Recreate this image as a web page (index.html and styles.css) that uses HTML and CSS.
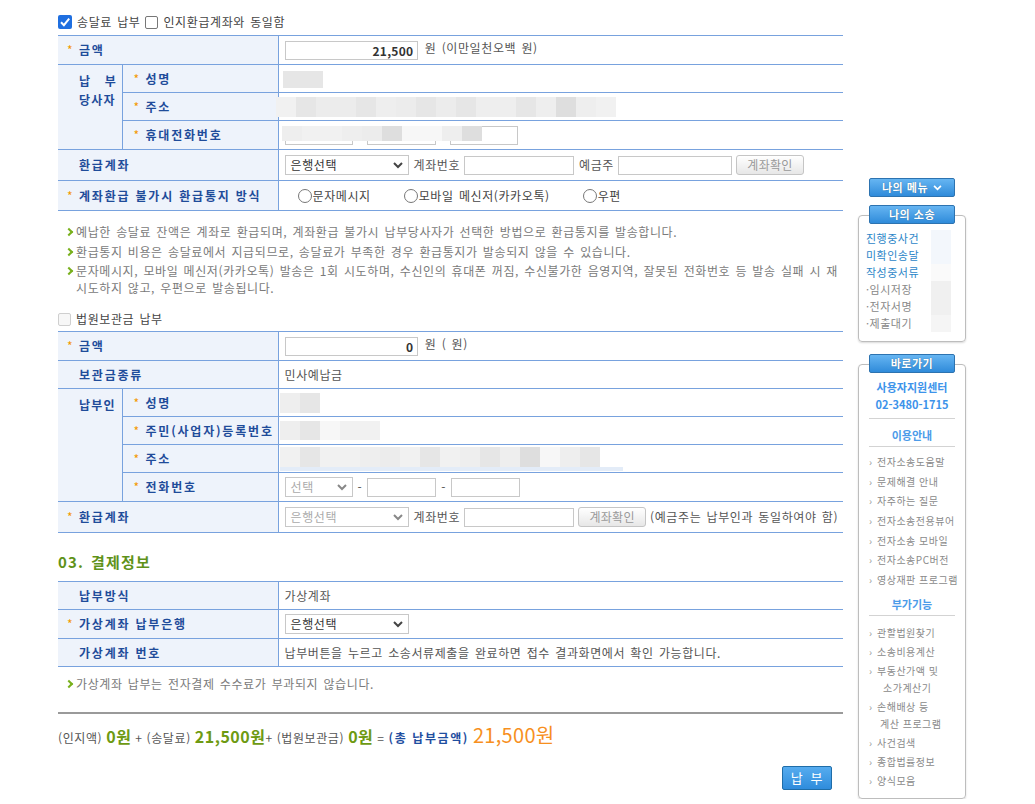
FILE: index.html
```html
<!DOCTYPE html>
<html lang="ko">
<head>
<meta charset="utf-8">
<title>납부</title>
<link rel="stylesheet" href="styles.css">
</head>
<body>
<div class="page">
  <main class="main">
    <div class="chkline">
      <span class="cb on"><svg viewBox="0 0 14 14" width="14" height="14"><path d="M3 7.3 L5.9 10.2 L11.2 3.6" fill="none" stroke="#fff" stroke-width="2"/></svg></span>
      <span class="chk-text">송달료 납부</span>
      <span class="cb"></span>
      <span class="chk-text">인지환급계좌와 동일함</span>
    </div>

    <table class="form">
      <colgroup><col class="c1"><col class="c2"><col class="c3"></colgroup>
      <tr class="h29">
        <th colspan="2"><i class="st">*</i>금액</th>
        <td><span class="inp amt">21,500</span> 원 (이만일천오백 원)</td>
      </tr>
      <tr class="h28">
        <th rowspan="3" class="grp"><span class="just"><span>납</span><span>부</span></span>당사자</th>
        <th class="sub"><i class="st">*</i>성명</th>
        <td class="blurcell"><span class="blur b-name1"><b class="g1"></b><b class="g1"></b></span></td>
      </tr>
      <tr class="h28">
        <th class="sub"><i class="st">*</i>주소</th>
        <td class="blurcell"><span class="blur b-addr1"><b class="g5"></b><b class="g1"></b><b class="g2"></b><b class="g2"></b><b class="g1"></b><b class="g3"></b><b class="g2"></b><b class="g1"></b><b class="g2"></b><b class="g1"></b><b class="g3"></b><b class="g3"></b><b class="g1"></b><b class="g3"></b><b class="g4"></b><b class="g3"></b><b class="g5"></b></span></td>
      </tr>
      <tr class="h29">
        <th class="sub"><i class="st">*</i>휴대전화번호</th>
        <td>
          <span class="phone">
            <span class="inp ph"></span><span class="inp ph"></span><span class="inp ph"></span>
            <span class="blur b-ph"><b class="g3"></b><b class="g5"></b><b class="g5"></b><b class="g3"></b><b class="g2"></b><b class="g4"></b><b class="g6"></b><b class="g6"></b><b class="g3"></b><b class="g4"></b></span>
          </span>
        </td>
      </tr>
      <tr class="h31">
        <th colspan="2" class="nost">환급계좌</th>
        <td>
          <span class="row-ctrl">
            <span class="sel bank">은행선택<svg class="chev" viewBox="0 0 10 7" width="10" height="7"><path d="M1 1 L5 5 L9 1" fill="none" stroke="#444" stroke-width="2"/></svg></span>
            <span class="lbl">계좌번호</span><span class="inp acct"></span>
            <span class="lbl">예금주</span><span class="inp owner"></span>
            <span class="btn-gray">계좌확인</span>
          </span>
        </td>
      </tr>
      <tr class="h30">
        <th colspan="2"><i class="st">*</i>계좌환급 불가시 환급통지 방식</th>
        <td>
          <span class="radios">
            <span class="opt"><span class="rd"></span>문자메시지</span>
            <span class="opt"><span class="rd"></span>모바일 메신저(카카오톡)</span>
            <span class="opt"><span class="rd"></span>우편</span>
          </span>
        </td>
      </tr>
    </table>

    <ul class="notes">
      <li>예납한 송달료 잔액은 계좌로 환급되며, 계좌환급 불가시 납부당사자가 선택한 방법으로 환급통지를 발송합니다.</li>
      <li>환급통지 비용은 송달료에서 지급되므로, 송달료가 부족한 경우 환급통지가 발송되지 않을 수 있습니다.</li>
      <li>문자메시지, 모바일 메신저(카카오톡) 발송은 1회 시도하며, 수신인의 휴대폰 꺼짐, 수신불가한 음영지역, 잘못된 전화번호 등 발송 실패 시 재<br>시도하지 않고, 우편으로 발송됩니다.</li>
    </ul>

    <div class="chkline second">
      <span class="cb dis"></span>
      <span class="chk-text">법원보관금 납부</span>
    </div>

    <table class="form">
      <colgroup><col class="c1"><col class="c2"><col class="c3"></colgroup>
      <tr class="h29">
        <th colspan="2"><i class="st">*</i>금액</th>
        <td><span class="inp amt">0</span> 원 ( 원)</td>
      </tr>
      <tr class="h28">
        <th colspan="2" class="nost">보관금종류</th>
        <td>민사예납금</td>
      </tr>
      <tr class="h28">
        <th rowspan="4" class="grp">납부인</th>
        <th class="sub"><i class="st">*</i>성명</th>
        <td class="blurcell"><span class="blur b-name2"><b class="g3"></b><b class="g1"></b></span></td>
      </tr>
      <tr class="h28">
        <th class="sub"><i class="st">*</i>주민(사업자)등록번호</th>
        <td class="blurcell"><span class="blur b-id"><b class="g3"></b><b class="g1"></b><b class="g6"></b><b class="g5"></b><b class="g5"></b></span></td>
      </tr>
      <tr class="h28">
        <th class="sub"><i class="st">*</i>주소</th>
        <td class="blurcell">
          <span class="addr2">
            <span class="blur b-addr2"><b class="g5"></b><b class="g1"></b><b class="g5"></b><b class="g5"></b><b class="g3"></b><b class="g2"></b><b class="g5"></b><b class="g1"></b><b class="g5"></b><b class="g3"></b><b class="g1"></b><b class="g3"></b><b class="g4"></b><b class="g6"></b><b class="g3"></b><b class="g1"></b></span>
            <span class="underbar"></span>
          </span>
        </td>
      </tr>
      <tr class="h29">
        <th class="sub"><i class="st">*</i>전화번호</th>
        <td>
          <span class="row-ctrl">
            <span class="sel tel dis">선택<svg class="chev" viewBox="0 0 10 7" width="10" height="7"><path d="M1 1 L5 5 L9 1" fill="none" stroke="#888" stroke-width="2"/></svg></span>
            <span class="dash">-</span><span class="inp ph2"></span>
            <span class="dash">-</span><span class="inp ph2"></span>
          </span>
        </td>
      </tr>
      <tr class="h31">
        <th colspan="2"><i class="st">*</i>환급계좌</th>
        <td>
          <span class="row-ctrl">
            <span class="sel bank dis">은행선택<svg class="chev" viewBox="0 0 10 7" width="10" height="7"><path d="M1 1 L5 5 L9 1" fill="none" stroke="#888" stroke-width="2"/></svg></span>
            <span class="lbl">계좌번호</span><span class="inp acct"></span>
            <span class="btn-gray">계좌확인</span>
            <span class="lbl2">(예금주는 납부인과 동일하여야 함)</span>
          </span>
        </td>
      </tr>
    </table>

    <h3 class="sec-title">03. 결제정보</h3>

    <table class="form">
      <colgroup><col class="c1"><col class="c2"><col class="c3"></colgroup>
      <tr class="h28">
        <th colspan="2" class="nost">납부방식</th>
        <td>가상계좌</td>
      </tr>
      <tr class="h29">
        <th colspan="2"><i class="st">*</i>가상계좌 납부은행</th>
        <td><span class="sel bank">은행선택<svg class="chev" viewBox="0 0 10 7" width="10" height="7"><path d="M1 1 L5 5 L9 1" fill="none" stroke="#444" stroke-width="2"/></svg></span></td>
      </tr>
      <tr class="h28">
        <th colspan="2" class="nost">가상계좌 번호</th>
        <td>납부버튼을 누르고 소송서류제출을 완료하면 접수 결과화면에서 확인 가능합니다.</td>
      </tr>
    </table>

    <ul class="notes single">
      <li>가상계좌 납부는 전자결제 수수료가 부과되지 않습니다.</li>
    </ul>

    <div class="totals"><span class="t-lbl">(인지액)</span> <span class="t-amt">0원</span> <span class="t-op">+</span> <span class="t-lbl">(송달료)</span> <span class="t-amt">21,500원</span><span class="t-op">+</span> <span class="t-lbl">(법원보관금)</span> <span class="t-amt">0원</span> <span class="t-op">=</span> <span class="t-sum">(총 납부금액)</span> <span class="t-total">21,500원</span></div>

    <div class="actions">
      <span class="btn-blue">납 부</span>
    </div>
  </main>

  <aside class="side">
    <div class="tab menu-btn">나의 메뉴 <svg viewBox="0 0 10 7" width="9" height="6"><path d="M1 1 L5 5 L9 1" fill="none" stroke="#fff" stroke-width="2"/></svg></div>

    <div class="sbox">
      <div class="tab">나의 소송</div>
      <ul class="mycase">
        <li class="blue"><span>진행중사건</span><span class="cnt c-a"></span></li>
        <li class="blue"><span>미확인송달</span><span class="cnt c-a"></span></li>
        <li class="blue"><span>작성중서류</span><span class="cnt c-b"></span></li>
        <li><span>·임시저장</span><span class="cnt c-c"></span></li>
        <li><span>·전자서명</span><span class="cnt c-c"></span></li>
        <li><span>·제출대기</span><span class="cnt c-d"></span></li>
      </ul>
    </div>

    <div class="sbox quick">
      <div class="tab">바로가기</div>
      <div class="center-info">
        <strong>사용자지원센터</strong>
        <strong>02-3480-1715</strong>
      </div>
      <div class="sub-head first">이용안내</div>
      <ul class="links">
        <li>전자소송도움말</li>
        <li>문제해결 안내</li>
        <li>자주하는 질문</li>
        <li>전자소송전용뷰어</li>
        <li>전자소송 모바일</li>
        <li>전자소송PC버전</li>
        <li>영상재판 프로그램</li>
      </ul>
      <div class="sub-head second">부가기능</div>
      <ul class="links more">
        <li>관할법원찾기</li>
        <li>소송비용계산</li>
        <li>부동산가액 및<span class="wrap2">소가계산기</span></li>
        <li>손해배상 등<span class="wrap2 w2b">계산 프로그램</span></li>
        <li>사건검색</li>
        <li>종합법률정보</li>
        <li>양식모음</li>
      </ul>
    </div>
  </aside>
</div>
</body>
</html>
```

FILE: styles.css
```css
* { box-sizing: border-box; }

body {
  margin: 0;
  background: #fff;
  font-family: "Noto Sans CJK KR", "Noto Sans", sans-serif;
  font-size: 12px;
  color: #555;
}

.page {
  display: flex;
  align-items: flex-start;
  padding-left: 58px;
}

.main {
  width: 785px;
  padding-top: 13px;
  letter-spacing: 0.6px;
  word-spacing: 1.3px;
}

/* checkbox line */
.chkline {
  display: flex;
  align-items: center;
  height: 18px;
  margin-bottom: 4px;
  color: #444;
  line-height: 18px;
}
.chkline.second { margin-top: 14px; margin-bottom: 3px; }
.cb {
  width: 13px;
  height: 13px;
  border: 1px solid #777;
  border-radius: 2px;
  background: #fff;
  margin-right: 5px;
  flex: none;
  display: flex;
  align-items: center;
  justify-content: center;
}
.cb.on {
  width: 14px;
  height: 14px;
  border: none;
  background: #1f6fe0;
  border-radius: 2px;
}
.cb.dis {
  border-color: #cfcfcf;
  background: #f7f7f7;
  width: 13px;
  height: 13px;
}
.chk-text { margin-right: 5px; }

/* form tables */
.form {
  width: 785px;
  border-collapse: collapse;
  table-layout: fixed;
  border-top: 1px solid #78a2de;
}
.form col.c1 { width: 64px; }
.form col.c2 { width: 156px; }
.form tr { border-bottom: 1px solid #78a2de; }
.form th {
  background: #eef3fb;
  color: #1f4c9a;
  font-weight: bold;
  text-align: left;
  padding: 0 0 0 9px;
  border-right: 1px solid #78a2de;
  white-space: nowrap;
  line-height: 16px;
  letter-spacing: 1.8px;
  word-spacing: 0;
}
.form th.nost { padding-left: 21px; }
.form th.sub { padding-left: 11px; }
.form th.grp {
  vertical-align: top;
  padding: 6px 0 0 21px;
  line-height: 19px;
  letter-spacing: 1.2px;
}
.just {
  display: flex;
  justify-content: space-between;
  width: 38px;
}
.st {
  display: inline-block;
  width: 12px;
  font-style: normal;
  font-weight: normal;
  color: #f39800;
  letter-spacing: 0;
}
.form td {
  padding: 0 0 0 6px;
  color: #555;
  white-space: nowrap;
  line-height: 16px;
}
.form td.blurcell { padding-left: 0; }

.h28 > * { height: 28px; }
.h29 > * { height: 29px; }
.h30 > * { height: 30px; }
.h31 > * { height: 31px; }

/* inputs */
.inp {
  display: inline-block;
  vertical-align: middle;
  height: 19px;
  border: 1px solid #c8c8c8;
  background: #fff;
  line-height: 17px;
  padding: 0 3px;
}
.inp.amt {
  width: 133px;
  text-align: right;
  font-weight: bold;
  color: #333;
  margin-right: 2px;
  letter-spacing: 0.3px;
}
.phone {
  display: flex;
  align-items: center;
  position: relative;
  gap: 14px;
}
.inp.ph { width: 68px; }
.phone .inp.ph:nth-child(2) { width: 69px; }
.phone .blur {
  position: absolute;
  left: -3px;
  top: 0;
}

.row-ctrl {
  display: flex;
  align-items: center;
}
.sel {
  display: inline-flex;
  align-items: center;
  justify-content: space-between;
  height: 20px;
  border: 1px solid #c8c8c8;
  background: #fff;
  color: #333;
  padding: 0 5px 0 5px;
  font-size: 12px;
  vertical-align: middle;
}
.sel.bank { width: 124px; }
.sel.tel { width: 68px; }
.sel.dis { color: #aaa; }
.sel .chev { flex: none; }
.lbl { margin: 0 4px 0 5px; color: #555; }
.lbl2 { margin-left: 4px; color: #555; }
.inp.acct { width: 110px; }
.inp.owner { width: 114px; }
.btn-gray {
  display: inline-block;
  width: 68px;
  height: 20px;
  margin-left: 4px;
  border: 1px solid #c5c5c5;
  border-radius: 3px;
  background: linear-gradient(#ffffff, #e7e7e7);
  color: #999;
  text-align: center;
  line-height: 18px;
  letter-spacing: 0.3px;
}
.dash { margin: 0 5px; color: #555; }
.inp.ph2 { width: 69px; }

/* radios */
.radios {
  display: flex;
  align-items: center;
  padding-left: 13px;
}
.opt {
  display: inline-flex;
  align-items: center;
  margin-right: 33px;
  color: #444;
}
.rd {
  width: 14px;
  height: 14px;
  border: 1px solid #777;
  border-radius: 50%;
  background: #fff;
  margin-right: 1px;
}

/* blurred personal data */
.blur { display: inline-flex; vertical-align: middle; }
.blur b { display: block; width: 20px; height: 20px; }
.b-name1 { margin-left: 4px; }
.b-name1 b { height: 17px; }
.b-addr1 { margin-left: -3px; }
.b-ph b { height: 15px; }
.b-name2 { margin-left: 1px; }
.b-id { margin-left: 1px; }
.b-id b { height: 19px; }
.addr2 { display: inline-flex; flex-direction: column; margin-left: 1px; vertical-align: middle; }
.underbar { display: block; width: 343px; height: 4px; background: #e3ecf8; }
.g1 { background: #e6e6e6; }
.g2 { background: #ececec; }
.g3 { background: #eeeeee; }
.g4 { background: #dedede; }
.g5 { background: #f1f1f1; }
.g6 { background: #f7f7f7; }

/* notes */
.notes {
  list-style: none;
  margin: 0;
  padding: 12px 0 0 0;
  color: #7a7a7a;
}
.notes li {
  position: relative;
  padding-left: 18px;
  line-height: 17px;
  margin-bottom: 2.5px;
}
.notes li::before {
  content: "";
  position: absolute;
  left: 8px;
  top: 6px;
  width: 4px;
  height: 4px;
  border-right: 2px solid #78b01c;
  border-top: 2px solid #78b01c;
  transform: rotate(45deg);
}
.notes.single { padding-top: 8px; }

.sec-title {
  margin: 19px 0 9px;
  font-size: 15px;
  font-weight: bold;
  color: #5f921a;
  line-height: 20px;
  letter-spacing: 1.2px;
}

/* totals */
.totals {
  margin-top: 20px;
  border-top: 2px solid #9a9a9a;
  padding-top: 9px;
  height: 41px;
  white-space: nowrap;
  color: #555;
  line-height: 24px;
  word-spacing: 0;
  letter-spacing: 0.6px;
}
.t-lbl { font-size: 12px; color: #555; }
.t-amt { font-size: 16px; font-weight: bold; color: #6e9a12; letter-spacing: 0.5px; }
.t-op { font-size: 12px; color: #555; }
.t-sum { font-size: 12px; font-weight: bold; color: #1f4ea0; letter-spacing: 1.6px; }
.t-total { font-size: 20px; color: #f7901e; letter-spacing: 0.3px; }

.actions {
  display: flex;
  justify-content: flex-end;
  padding-right: 11px;
  margin-top: 13px;
}
.btn-blue {
  display: inline-block;
  width: 50px;
  height: 24px;
  border: 1px solid #1f6da8;
  border-radius: 2px;
  background: linear-gradient(#56acef, #2f8cdc);
  color: #fff;
  font-size: 13px;
  text-align: center;
  line-height: 22px;
  word-spacing: 3px;
}

/* sidebar */
.side {
  width: 108px;
  margin-left: 15px;
  padding-top: 178px;
}
.tab {
  width: 86px;
  height: 19px;
  margin-left: 11px;
  border: 1px solid #2d73b0;
  border-radius: 2px;
  background: linear-gradient(#66b5f2, #2f8bda);
  color: #fff;
  font-weight: bold;
  font-size: 11px;
  text-align: center;
  line-height: 17px;
  letter-spacing: 0.5px;
  text-shadow: 0 0 1px rgba(0,0,0,0.4);
}
.menu-btn {
  display: flex;
  align-items: center;
  justify-content: center;
  gap: 5px;
}
.sbox {
  margin-top: 18px;
  border: 1px solid #bdbdbd;
  border-radius: 4px;
  box-shadow: 0 1px 2px rgba(0,0,0,0.15);
  padding-bottom: 9px;
}
.sbox > .tab {
  margin-top: -11px;
  margin-left: 10px;
}
.mycase {
  list-style: none;
  margin: 6px 0 0;
  padding: 0 14px 0 7px;
  font-size: 11px;
  letter-spacing: 0.5px;
}
.mycase li {
  display: flex;
  justify-content: space-between;
  line-height: 17px;
  color: #888;
}
.mycase li.blue { color: #2c86c8; }
.cnt { width: 20px; height: 17px; }
.c-a { background: #f3f7fc; }
.c-b { background: #fafafa; }
.c-c { background: #f0f0f0; }
.c-d { background: #f5f5f5; }

.sbox.quick { margin-top: 22px; padding-bottom: 7px; }
.center-info {
  display: flex;
  flex-direction: column;
  align-items: center;
  margin-top: 6px;
  padding-bottom: 5px;
  margin-left: 10px;
  margin-right: 10px;
  border-bottom: 1px solid #d3d3d3;
  color: #3d93ea;
  font-size: 11px;
  line-height: 17px;
}
.sub-head {
  margin: 0 10px;
  text-align: center;
  color: #4c9be9;
  font-weight: bold;
  font-size: 11px;
  line-height: 22px;
  border-bottom: 1px solid #d3d3d3;
}
.sub-head.first { margin-top: 5px; }
.sub-head.second { margin-top: 2px; }
.links {
  list-style: none;
  margin: 0;
  padding: 6px 0 0 0;
  font-size: 10px;
  color: #8a8a8a;
  letter-spacing: 0.5px;
}
.links.more { padding-top: 8px; }
.links li {
  position: relative;
  padding-left: 18px;
  line-height: 17px;
  padding-bottom: 2.7px;
}
.links.more li { padding-bottom: 2px; }
.links li::before {
  content: "›";
  position: absolute;
  left: 10px;
  top: 0;
  color: #999;
}
.wrap2 { display: block; padding-left: 6px; }
.wrap2.w2b { padding-left: 3px; }
```
